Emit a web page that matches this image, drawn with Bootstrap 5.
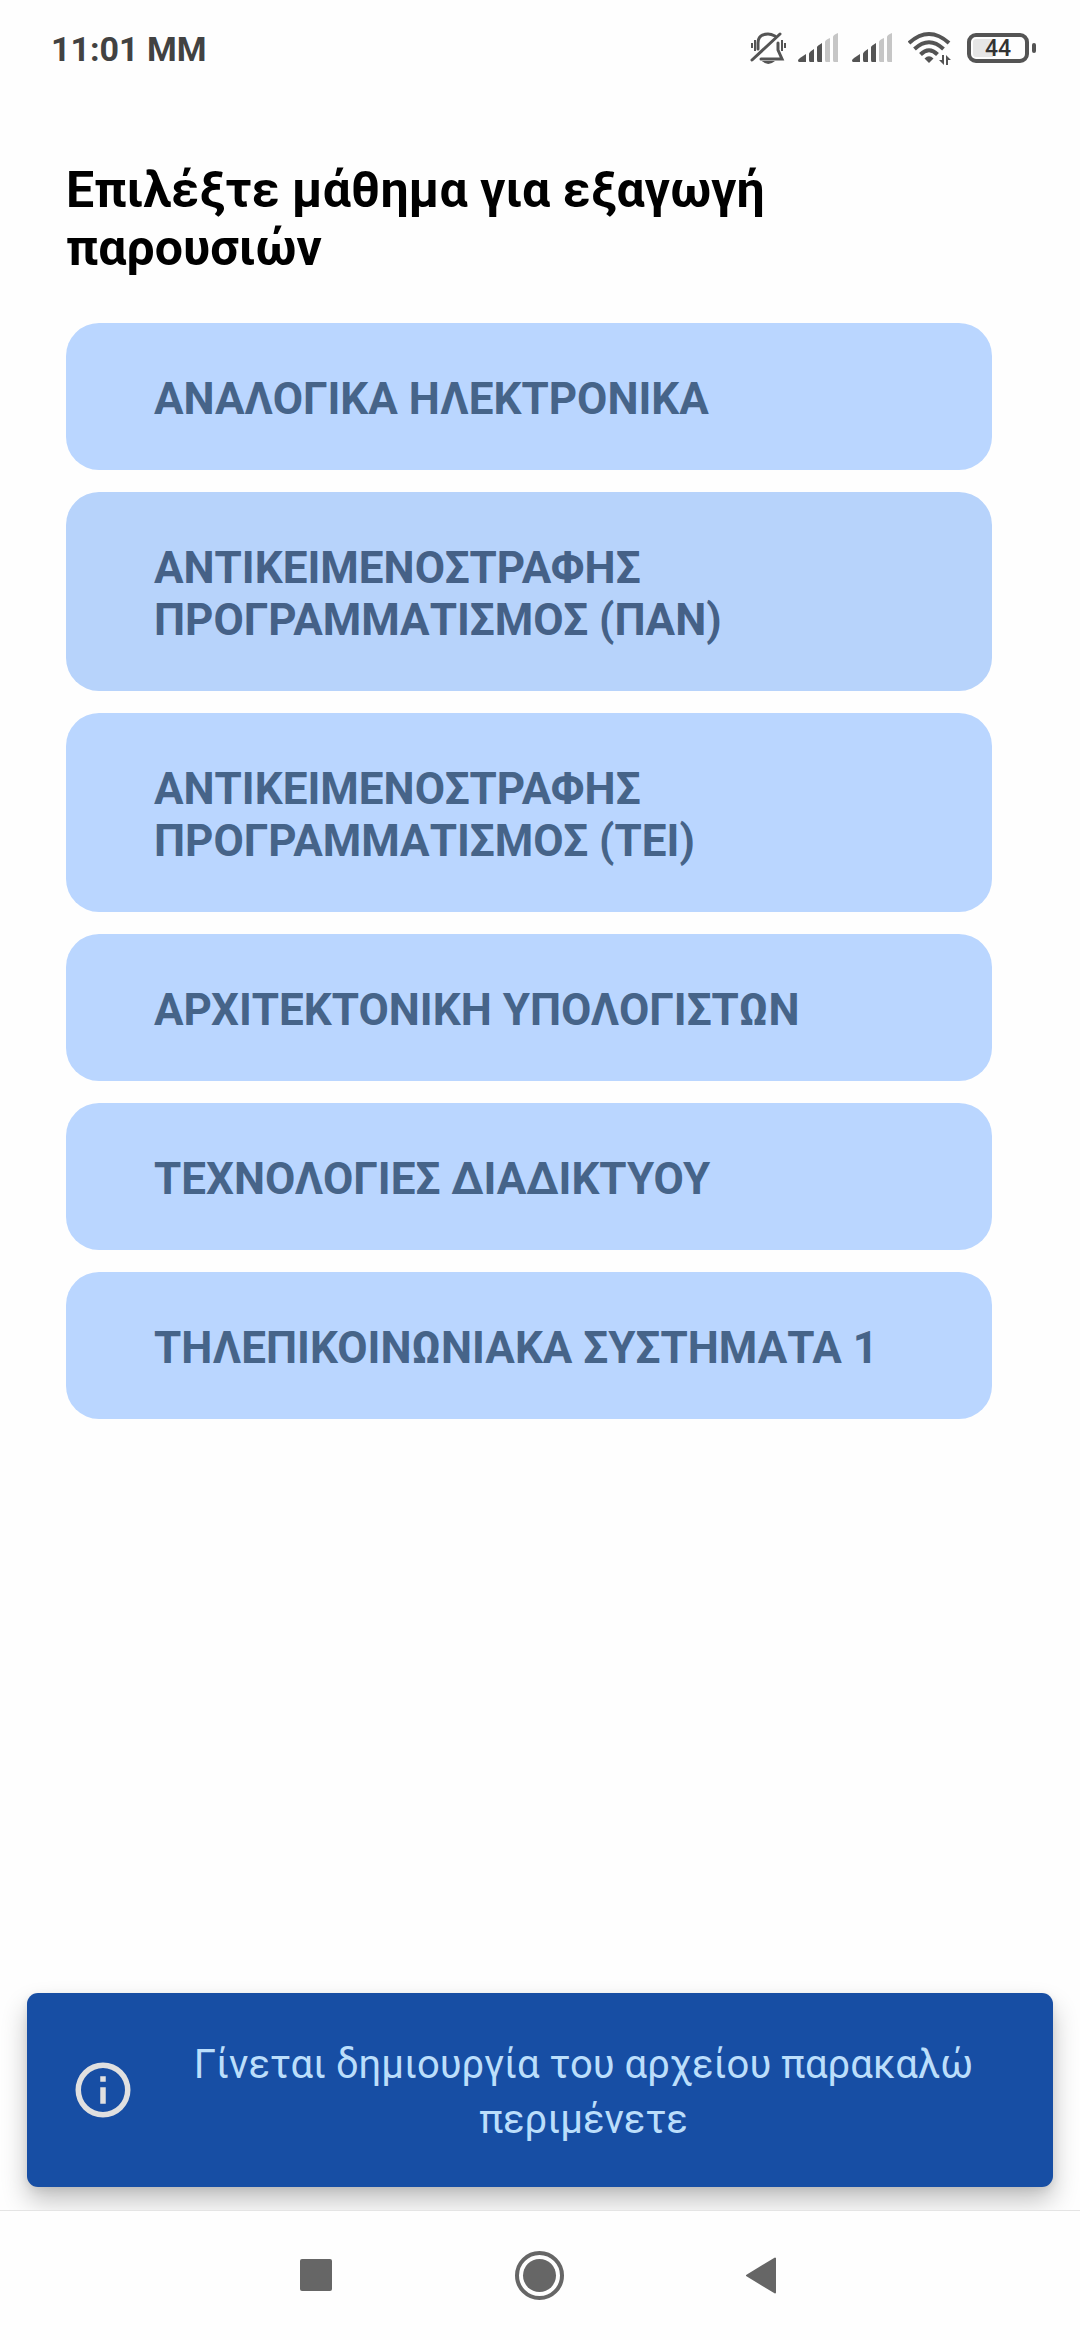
<!DOCTYPE html>
<html lang="el">
<head>
<meta charset="utf-8">
<meta name="viewport" content="width=device-width, initial-scale=1">
<title>Εξαγωγή παρουσιών</title>
<link href="https://cdn.jsdelivr.net/npm/bootstrap@5.3.0/dist/css/bootstrap.min.css" rel="stylesheet">
<style>
  body { font-family: Roboto, "Noto Sans", sans-serif; background: #fefefe; color: #000; }
  svg { display: block; }
  .status-bar { height: 96px; padding: 0 44px 0 51px; color: #424242; }
  .clock { font-size: 34px; line-height: 40px; font-weight: 700; padding-top: 2px; }
  .status-icons { color: #545454; }
  .signal-pair { gap: 14px; margin: 0 16px 0 12px; }
  .battery { width: 62px; height: 30px; border: 4px solid #545454; border-radius: 9px; color: #333; font-size: 23px; line-height: 20px; font-weight: 500;
    background: linear-gradient(90deg, #e6e6e6 40%, transparent 40%) content-box; padding: 2px; }
  .battery-tip { width: 4px; height: 10px; margin-left: 3px; border-radius: 2px; background: #545454; }
  .course-page { padding: 65px 88px 0 66px; }
  .page-title { font-size: 50px; line-height: 58px; font-weight: 700; margin-bottom: 46px; }
  .course-list { gap: 22px; }
  .course { --bs-btn-bg: #bad6ff; --bs-btn-color: #466489; --bs-btn-border-width: 0; --bs-btn-border-radius: 33px;
    --bs-btn-hover-bg: #b7d3fb; --bs-btn-hover-color: #466489; --bs-btn-active-bg: #b7d3fb;
    --bs-btn-font-weight: 700; --bs-btn-font-size: 44px; --bs-btn-line-height: 52px;
    padding: 50px 88px 45px; }
  .course.pressed { --bs-btn-bg: #b7d3fb; --bs-btn-color: #456187; }
  .notice { margin: 0 27px 23px; padding: 40px 66px 40px 43px; border-radius: 11px; background: #174ea4; color: #bbdefb;
    box-shadow: 0 14px 26px rgba(0,0,0,.24), 0 3px 8px rgba(0,0,0,.08); }
  .notice-text { font-size: 40px; line-height: 55px; padding: 4px 0 0 44px; }
  .system-nav { height: 130px; gap: 142px; background: #fefefe; border-top: 1px solid #e4e4e4; color: #666; }
  .nav-key { --bs-btn-padding-x: 0; --bs-btn-padding-y: 0; --bs-btn-border-width: 0; width: 80px; color: #666; }
</style>
<script src="https://cdn.jsdelivr.net/npm/bootstrap@5.3.0/dist/js/bootstrap.bundle.min.js"></script>
</head>
<body class="d-flex flex-column min-vh-100">

<header class="status-bar d-flex align-items-center justify-content-between">
  <span class="clock">11:01 ΜΜ</span>
  <div class="status-icons d-flex align-items-center">
    <svg width="36" height="34" viewBox="0 0 36 34" fill="none" stroke="currentColor" stroke-width="3" stroke-linecap="round" aria-label="Αθόρυβο">
      <path d="M8 18V12C8 6 12 3 18 3C21 3 23 4 25 5M28 12V19L32 28H11"/>
      <path d="M2 29L30 3"/><path d="M2 12V17M5 9V20M32 9V20M35 12V17" stroke-width="2" stroke-linecap="butt"/>
      <path d="M12 30H25Q18 36 12 30Z" fill="currentColor" stroke="none"/>
    </svg>
    <div class="signal-pair d-flex">
      <svg width="40" height="30" viewBox="0 0 40 30" fill="currentColor" aria-label="Σήμα SIM 1">
        <path d="M0 27L2 25L8 21V29H1Q0 29 0 27ZM11 21Q11 19 16 16V29H12Q11 29 11 27ZM19 14Q19 13 24 10V29H20Q19 29 19 27Z"/>
        <path d="M27 9Q27 7 32 5V29H28Q27 29 27 27ZM35 4Q35 2 40 0V29H36Q35 29 35 27Z" fill="#c6c6c6"/>
      </svg>
      <svg width="40" height="30" viewBox="0 0 40 30" fill="currentColor" aria-label="Σήμα SIM 2">
        <path d="M0 27L2 25L8 21V29H1Q0 29 0 27ZM11 21Q11 19 16 16V29H12Q11 29 11 27ZM19 14Q19 13 24 10V29H20Q19 29 19 27Z"/>
        <path d="M27 9Q27 7 32 5V29H28Q27 29 27 27ZM35 4Q35 2 40 0V29H36Q35 29 35 27Z" fill="#c6c6c6"/>
      </svg>
    </div>
    <svg class="me-3" width="43" height="34" viewBox="0 0 43 34" fill="none" stroke="currentColor" stroke-width="4" aria-label="Wi-Fi">
      <path d="M1 12Q21 -6 41 12M6.500 18Q21 4.500 35.500 18M12.500 23.500Q21 15 29.500 23.500"/>
      <path d="M16.500 27.500Q21 23 25.500 27.500L21 32Z" fill="currentColor" stroke="none"/>
      <path d="M36 24V34L31 29H34V24ZM38 34V24L43 29H40V34Z" fill="currentColor" stroke="none"/>
    </svg>
    <div class="battery text-center">44</div>
    <div class="battery-tip"></div>
  </div>
</header>

<main class="course-page">
  <h1 class="page-title">Επιλέξτε μάθημα για εξαγωγή παρουσιών</h1>
  <div class="course-list d-grid">
    <button type="button" class="btn course text-start">ΑΝΑΛΟΓΙΚΑ ΗΛΕΚΤΡΟΝΙΚΑ</button>
    <button type="button" class="btn course pressed text-start">ΑΝΤΙΚΕΙΜΕΝΟΣΤΡΑΦΗΣ ΠΡΟΓΡΑΜΜΑΤΙΣΜΟΣ (ΠΑΝ)</button>
    <button type="button" class="btn course text-start">ΑΝΤΙΚΕΙΜΕΝΟΣΤΡΑΦΗΣ ΠΡΟΓΡΑΜΜΑΤΙΣΜΟΣ (ΤΕΙ)</button>
    <button type="button" class="btn course text-start">ΑΡΧΙΤΕΚΤΟΝΙΚΗ ΥΠΟΛΟΓΙΣΤΩΝ</button>
    <button type="button" class="btn course text-start">ΤΕΧΝΟΛΟΓΙΕΣ ΔΙΑΔΙΚΤΥΟΥ</button>
    <button type="button" class="btn course text-start">ΤΗΛΕΠΙΚΟΙΝΩΝΙΑΚΑ ΣΥΣΤΗΜΑΤΑ 1</button>
  </div>
</main>

<div class="notice d-flex align-items-center mt-auto" role="status">
  <svg class="flex-shrink-0" width="66" height="66" viewBox="0 0 24 24" fill="#e0e0e0" aria-hidden="true"><path d="M11 7h2v2h-2zM11 11h2v6h-2zM12 2a10 10 0 1 0 0 20a10 10 0 0 0 0-20zm0 18a8 8 0 1 1 0-16a8 8 0 0 1 0 16z"/></svg>
  <div class="notice-text flex-grow-1 text-center">Γίνεται δημιουργία του αρχείου παρακαλώ περιμένετε</div>
</div>

<nav class="system-nav d-flex align-items-center justify-content-center position-relative" aria-label="Σύστημα">
  <button type="button" class="btn nav-key d-flex justify-content-center" aria-label="Πρόσφατα"><svg width="48" height="50" viewBox="0 0 48 50" fill="currentColor"><rect x="6" y="8" width="32" height="32" rx="2"/></svg></button>
  <button type="button" class="btn nav-key d-flex justify-content-center" aria-label="Αρχική"><svg width="50" height="50" viewBox="0 0 50 50"><circle cx="24.500" cy="24.500" r="22.500" fill="none" stroke="currentColor" stroke-width="4"/><circle cx="24.500" cy="24.500" r="16.500" fill="currentColor"/></svg></button>
  <button type="button" class="btn nav-key d-flex justify-content-center" aria-label="Πίσω"><svg width="48" height="50" viewBox="0 0 48 50" fill="currentColor" stroke="currentColor" stroke-width="2" stroke-linejoin="round"><path d="M9 24.500L37 7.500V41.500Z"/></svg></button>
</nav>
</body>
</html>
